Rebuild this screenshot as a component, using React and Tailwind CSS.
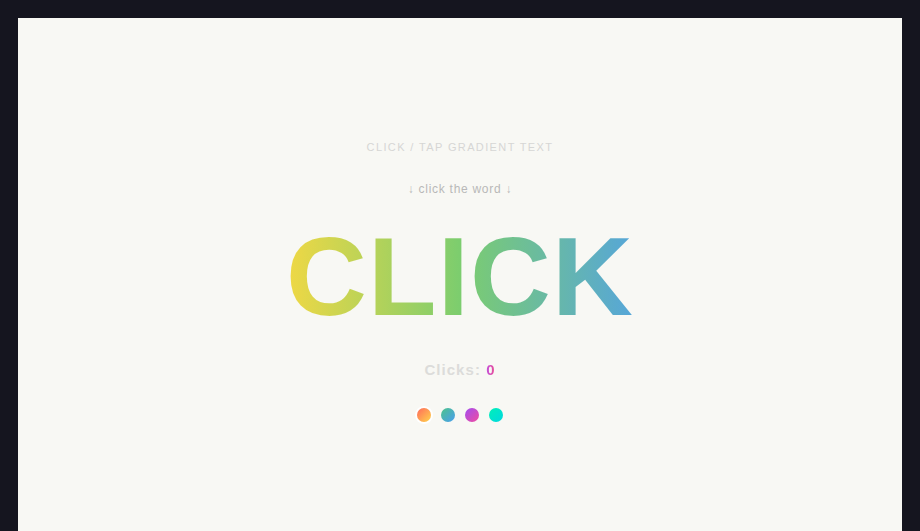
import React, { useState } from 'react';

const swatches = [
    { dot: 'bg-[linear-gradient(135deg,#ff6a5c,#ffd54a)]', text: 'bg-[linear-gradient(90deg,#f0d844,#7ccd6e,#56a6d9)]' },
    { dot: 'bg-[linear-gradient(135deg,#4cc38a,#4a9ef0)]', text: 'bg-[linear-gradient(90deg,#4cc38a,#4a9ef0)]' },
    { dot: 'bg-[linear-gradient(135deg,#a24df0,#f04ca0)]', text: 'bg-[linear-gradient(90deg,#a24df0,#f04ca0)]' },
    { dot: 'bg-[linear-gradient(135deg,#00f0b8,#00d8e0)]', text: 'bg-[linear-gradient(90deg,#00f0b8,#00d8e0)]' },
];

const App = () => {
    const [clicks, setClicks] = useState(0);
    const [active, setActive] = useState(0);

    return (
        <div className="h-[531px] overflow-hidden bg-[#15151f] px-[18px] pt-[18px] font-['Liberation_Sans',Arial,sans-serif]">
            <div className="h-[531px] pb-[6px] bg-[#f8f8f4] flex flex-col items-center justify-center">
                <p className="text-[11px] leading-4 tracking-[0.125em] text-[#d6d6d4]">CLICK / TAP GRADIENT TEXT</p>
                <p className="mt-[26px] text-[12px] leading-4 tracking-[0.06em] text-[#b8b8b8]">↓ click the word ↓</p>
                <button
                    type="button"
                    onClick={() => setClicks(clicks + 1)}
                    className={`mt-6 text-[112px] leading-none font-bold tracking-[0.01em] bg-clip-text text-transparent select-none cursor-pointer ${swatches[active].text}`}
                >
                    CLICK
                </button>
                <p className="mt-[27px] text-[15px] leading-5 font-bold tracking-[0.07em] text-[#dcdcda]">
                    Clicks: <span className="bg-[linear-gradient(90deg,#c04ee0,#f0508a)] bg-clip-text text-transparent">{clicks}</span>
                </p>
                <div className="mt-7 flex gap-[10px]">
                    {swatches.map((s, i) => (
                        <button
                            key={i}
                            type="button"
                            onClick={() => setActive(i)}
                            className={`w-[14px] h-[14px] rounded-full ${s.dot} ${active === i ? 'ring-2 ring-white' : ''}`}
                        />
                    ))}
                </div>
            </div>
        </div>
    );
};

export default App;
